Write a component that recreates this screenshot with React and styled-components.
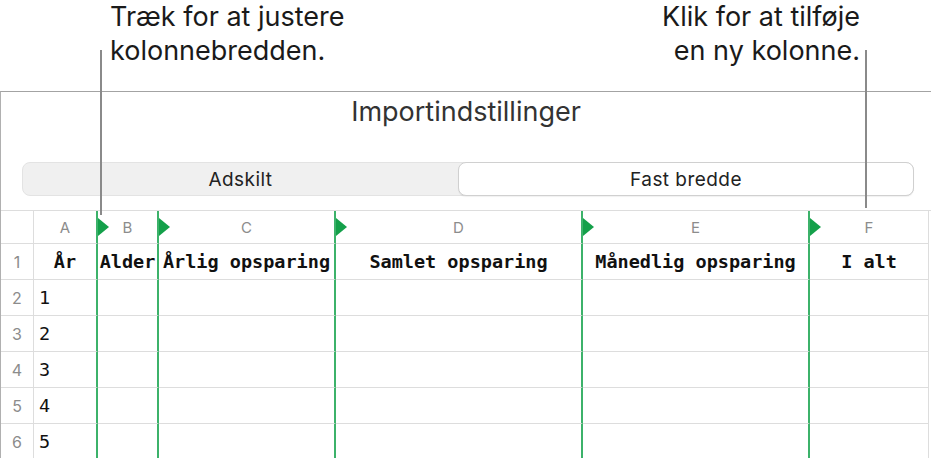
import React from "react";
import styled, { createGlobalStyle } from "styled-components";

const GlobalStyle = createGlobalStyle`
  html, body {
    margin: 0;
    padding: 0;
    background: #ffffff;
  }
  body {
    font-family: Inter, "Liberation Sans", Arial, sans-serif;
    color: #1c1c1c;
  }
`;

// Layout

const Page = styled.div`
  position: relative;
  width: 931px;
  height: 458px;
  overflow: hidden;
  background: #ffffff;
`;

const Callouts = styled.div`
  display: flex;
  justify-content: space-between;
  height: 91px;
  padding: 0 71px 0 110px;
`;

const CalloutText = styled.div`
  font-size: 27px;
  line-height: 34px;
  color: #1a1a1a;
  text-align: ${(p) => p.$align || "left"};
`;

const Leader = styled.div`
  position: absolute;
  top: 50px;
  left: ${(p) => p.$x}px;
  width: 2px;
  height: ${(p) => p.$length}px;
  background: #8a8a8a;
  z-index: 3;
`;

const Panel = styled.div`
  border-top: 1px solid #a3a3a3;
  border-left: 1px solid #b0b0b0;
`;

const Title = styled.h1`
  margin: 0;
  font-size: 27px;
  font-weight: 400;
  line-height: 40px;
  text-align: center;
  color: #333333;
`;

const Segmented = styled.div`
  display: grid;
  grid-template-columns: 435px 1fr;
  height: 34px;
  margin: 30px 17px 0 21px;
  box-sizing: border-box;
  background: #f0f0f0;
  border: 1px solid #e3e3e3;
  border-radius: 8px;
`;

const Segment = styled.div`
  display: flex;
  align-items: center;
  justify-content: center;
  margin: -1px ${(p) => (p.$active ? "-1px" : "0")} -1px 0;
  font-size: 19px;
  letter-spacing: 0.45px;
  color: #222222;
  border-radius: 8px;
  background: ${(p) => (p.$active ? "#ffffff" : "transparent")};
  border: 1px solid ${(p) => (p.$active ? "#d0d0d0" : "transparent")};
  box-shadow: ${(p) => (p.$active ? "0 1px 1px rgba(0,0,0,0.06)" : "none")};
`;

const Sheet = styled.div`
  display: grid;
  grid-template-columns: 33px 64px 61px 177px 247px 227px 119px;
  grid-auto-rows: 36px;
  grid-template-rows: 33px;
  margin-top: 14px;
  border-top: 1px solid #dddddd;
`;

const Cell = styled.div`
  position: relative;
  display: flex;
  align-items: center;
  justify-content: ${(p) => p.$justify || "center"};
  box-sizing: border-box;
  padding-left: ${(p) => p.$pad || 0}px;
  border-bottom: 1px solid #dddddd;
  border-right: ${(p) => (p.$divider ? "2px solid #3cb26a" : "1px solid #dddddd")};
  white-space: nowrap;
  overflow: visible;
`;

const ColumnLabel = styled(Cell)`
  font-size: 15px;
  color: #8c8c8c;

  ${(p) =>
    p.$marker &&
    `
    &::before {
      content: "";
      position: absolute;
      left: 0;
      top: 7px;
      width: 0;
      height: 0;
      border-top: 9.5px solid transparent;
      border-bottom: 9.5px solid transparent;
      border-left: 11px solid #14a04a;
    }
  `}
`;

const RowNumber = styled(Cell)`
  font-size: 16px;
  color: #8c8c8c;
`;

const DataCell = styled(Cell)`
  font-family: "DejaVu Sans Mono", "Liberation Mono", monospace;
  font-size: 18.5px;
  font-weight: ${(p) => (p.$bold ? 700 : 400)};
  color: #111111;
`;

const columns = ["A", "B", "C", "D", "E", "F"];
const headings = [
  "År",
  "Alder",
  "Årlig opsparing",
  "Samlet opsparing",
  "Månedlig opsparing",
  "I alt",
];
const years = ["1", "2", "3", "4", "5"];

const App = () => (
  <Page>
    <GlobalStyle />
    <Callouts>
      <CalloutText>
        Træk for at justere
        <br />
        kolonnebredden.
      </CalloutText>
      <CalloutText $align="right">
        Klik for at tilføje
        <br />
        en ny kolonne.
      </CalloutText>
    </Callouts>
    <Leader $x={100} $length={165} />
    <Leader $x={865} $length={158} />

    <Panel>
      <Title>Importindstillinger</Title>
      <Segmented>
        <Segment>Adskilt</Segment>
        <Segment $active>Fast bredde</Segment>
      </Segmented>

      <Sheet>
        <RowNumber />
        {columns.map((col, i) => (
          <ColumnLabel key={col} $marker={i > 0} $divider={i < 5}>
            {col}
          </ColumnLabel>
        ))}

        <RowNumber>1</RowNumber>
        {headings.map((text, i) => (
          <DataCell key={text} $bold $divider={i < 5}>
            {text}
          </DataCell>
        ))}

        {years.map((year, r) => (
          <React.Fragment key={year}>
            <RowNumber>{r + 2}</RowNumber>
            {columns.map((col, i) => (
              <DataCell
                key={col}
                $divider={i < 5}
                $justify="flex-start"
                $pad={i === 0 ? 5 : 0}
              >
                {i === 0 ? year : ""}
              </DataCell>
            ))}
          </React.Fragment>
        ))}
      </Sheet>
    </Panel>
  </Page>
);

export default App;
